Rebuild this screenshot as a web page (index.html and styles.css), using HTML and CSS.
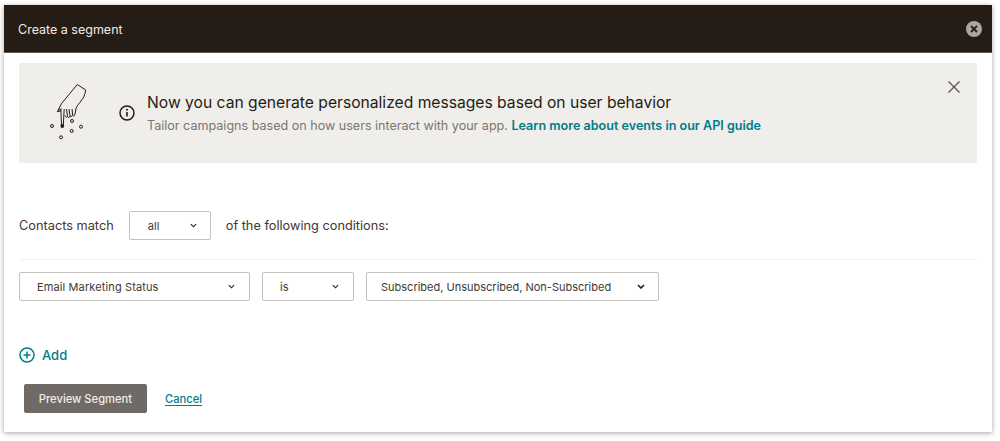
FILE: index.html
```html
<!DOCTYPE html>
<html lang="en">
<head>
<meta charset="utf-8">
<title>Create a segment</title>
<link rel="stylesheet" href="styles.css">
</head>
<body>
<div class="modal">
  <header class="modal-head">
    <span class="modal-title">Create a segment</span>
    <span class="modal-close">
      <svg width="8" height="8" viewBox="0 0 8 8"><path d="M1 1l6 6M7 1L1 7" stroke="#241c15" stroke-width="1.800" fill="none"/></svg>
    </span>
  </header>
  <div class="modal-body">
    <section class="banner">
      <svg class="hand" width="40" height="60" viewBox="0 0 40 60" fill="none" stroke="#241c15" stroke-width="1">
        <path d="M11.700 19.300L27.300.5l8.400 5.500C35 11 33.500 14 31.700 16 29 20 26.500 22 26 24.500L25 30c-.4 2.200-1.800 2.600-2.300 1L22 25"/>
        <path d="M22.400 31c-.5 2.200-2 2.300-2.400.6L19 25M20 32c-.5 2-2 2-2.500.4L16.500 25M17.500 32.500c-.6 1.200-2 .8-2.500-1"/>
        <path d="M11.700 19.300L7.300 27.700l3.700-.8M8.500 26.500L11.500 24.500"/>
        <path d="M10.800 25L11.500 41M14.200 25L13.300 41"/>
        <circle cx="12.300" cy="42" r="1.900" fill="#241c15" stroke="none"/>
        <circle cx="2" cy="42" r="1.500"/>
        <circle cx="22" cy="37" r="1.500"/>
        <circle cx="21.700" cy="47" r="1.500"/>
        <circle cx="31" cy="42.700" r="1.500"/>
        <circle cx="11" cy="53.300" r="1.500"/>
      </svg>
      <svg class="info" width="16" height="16" viewBox="0 0 16 16" fill="none">
        <circle cx="8" cy="8" r="7" stroke="#241c15" stroke-width="1.500"/>
        <path d="M8 7v4.500" stroke="#241c15" stroke-width="1.600"/>
        <circle cx="8" cy="4.800" r="1" fill="#241c15"/>
      </svg>
      <div class="banner-text">
        <h2 class="banner-title">Now you can generate personalized messages based on user behavior</h2>
        <p class="banner-sub">Tailor campaigns based on how users interact with your app. <a class="banner-link" href="#">Learn more about events in our API guide</a></p>
      </div>
      <svg class="banner-x" width="14" height="14" viewBox="0 0 14 14"><path d="M1.500 1.500l11 11M12.500 1.500l-11 11" stroke="#58534f" stroke-width="1.300" fill="none"/></svg>
    </section>

    <div class="match-row">
      <span>Contacts match</span>
      <div class="select select-all"><span>all</span>
        <svg class="chev" width="7" height="5" viewBox="0 0 8 5"><path d="M1 1l3 3 3-3" stroke="#241c15" stroke-width="1.200" fill="none"/></svg>
      </div>
      <span>of the following conditions:</span>
    </div>

    <div class="cond-row">
      <div class="select select-field"><span>Email Marketing Status</span>
        <svg class="chev" width="7" height="5" viewBox="0 0 8 5"><path d="M1 1l3 3 3-3" stroke="#241c15" stroke-width="1.200" fill="none"/></svg>
      </div>
      <div class="select select-op"><span>is</span>
        <svg class="chev" width="7" height="5" viewBox="0 0 8 5"><path d="M1 1l3 3 3-3" stroke="#241c15" stroke-width="1.200" fill="none"/></svg>
      </div>
      <div class="select select-value"><span>Subscribed, Unsubscribed, Non-Subscribed</span>
        <svg class="chev" width="8" height="5" viewBox="0 0 8 5"><path d="M1 1l3 3 3-3" stroke="#241c15" stroke-width="1.600" fill="none"/></svg>
      </div>
    </div>

    <a class="add" href="#">
      <svg width="16" height="16" viewBox="0 0 16 16" fill="none" stroke="#007c89" stroke-width="1.500">
        <circle cx="8" cy="8" r="7"/><path d="M8 4.500v7M4.500 8h7"/>
      </svg>
      <span>Add</span>
    </a>

    <div class="actions">
      <button class="btn-preview" type="button">Preview Segment</button>
      <a class="cancel" href="#">Cancel</a>
    </div>
  </div>
</div>
</body>
</html>
```
FILE: styles.css
```css
* { box-sizing: border-box; }
html, body { margin: 0; height: 441px; overflow: hidden; background: #fff; }
body { padding: 5px 8px 0 4px; font-family: Inter, "Liberation Sans", sans-serif; color: #241c15; }

.modal { height: 427px; display: flex; flex-direction: column; box-shadow: 0 1px 5px rgba(36, 28, 21, .4); background: #fff; }

.modal-head { height: 48px; flex: none; background: #241c15; border-bottom: 1px solid #5d5751; display: flex; align-items: center; justify-content: space-between; padding: 0 10px 0 14px; }
.modal-title { color: #eeedea; font-size: 12.500px; padding-top: 1px; }
.modal-close { width: 16px; height: 16px; border-radius: 50%; background: #aaa7a3; display: flex; align-items: center; justify-content: center; }

.modal-body { flex: 1; padding: 10px 15px 0; display: flex; flex-direction: column; }

.banner { height: 100px; flex: none; background: #efeeea; border-radius: 2px; display: flex; align-items: flex-start; position: relative; padding: 21px 0 0 31px; }
.hand { flex: none; }
.info { flex: none; margin: 21px 0 0 29px; }
.banner-text { margin-left: 12px; padding-top: 9px; }
.banner-title { margin: 0; font-size: 15.650px; line-height: 20px; font-weight: 400; }
.banner-sub { margin: 5px 0 0; font-size: 12.570px; line-height: 16px; color: #7a7570; }
.banner-link { color: #007c89; font-weight: 600; text-decoration: none; }
.banner-x { position: absolute; top: 17px; right: 16px; }

.match-row { display: flex; align-items: center; margin-top: 48px; font-size: 12.750px; height: 29px; color: #3e3833; }
.select { display: flex; align-items: center; justify-content: space-between; border: 1px solid #c3c1bd; border-radius: 2px; height: 29px; background: #fff; font-size: 11px; color: #3e3833; letter-spacing: .12px; }
.select-all { width: 82px; margin: 0 15px; padding: 0 13px 0 18px; }
.select-all span { padding-top: 1px; }

.cond-row { display: flex; margin-top: 19px; padding-top: 12px; border-top: 1px solid #f3f2f0; gap: 12px; }
.select-field { width: 231px; padding: 0 14px 0 17px; }
.select-op { width: 92px; padding: 0 14px 0 17px; }
.select-value { width: 293px; padding: 0 13px 0 14px; letter-spacing: 0; }

.add { display: flex; align-items: center; gap: 7px; margin-top: 46px; color: #007c89; text-decoration: none; font-weight: 500; font-size: 13px; height: 16px; }

.actions { display: flex; align-items: center; margin: 21px 0 0 5px; gap: 18px; }
.btn-preview { width: 123px; height: 29px; border: 0; border-radius: 2px; background: #6f6a65; color: #efeeea; font: 500 11.200px Inter, "Liberation Sans", sans-serif; padding: 1px 0 0; }
.cancel { color: #007c89; font-size: 11.200px; font-weight: 500; text-decoration: underline; text-underline-offset: 2px; }
```
